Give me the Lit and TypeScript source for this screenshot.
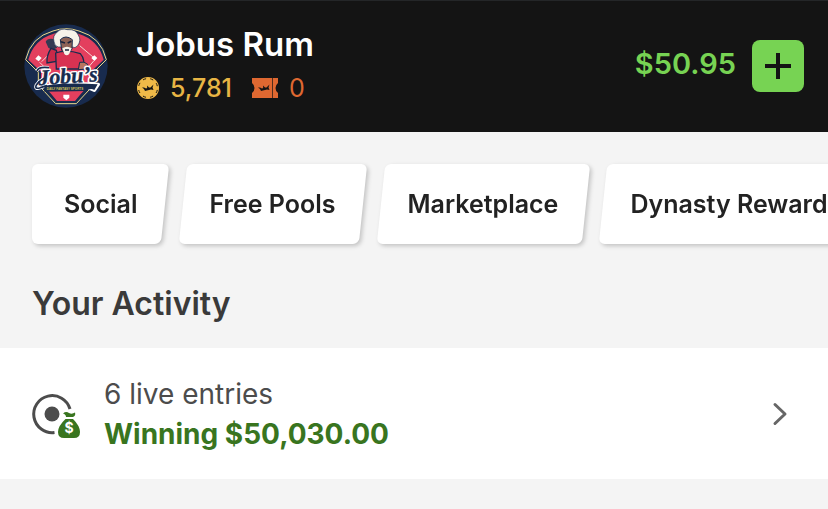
import { LitElement, html, css, svg } from "lit";
import { customElement, property } from "lit/decorators.js";
import { classMap } from "lit/directives/class-map.js";

const teamLogo = html`<svg class="logo" viewBox="23 23 252 252" role="img" aria-label="Team logo">
  <defs><clipPath id="disc"><circle cx="149" cy="149" r="125" /></clipPath></defs>
  <circle cx="149" cy="149" r="125" fill="#182b4e" />
  <g clip-path="url(#disc)">
    <path d="M28 130 Q44 62 110 44 Q149 30 188 44 Q254 62 270 130 L232 168 L232 206 L204 236 L180 262 H118 L94 236 L66 206 L66 168 Z"
      fill="#182b4e" stroke="#ecd98a" stroke-width="3" />
    <path d="M36 130 Q52 70 112 52 Q149 38 186 52 Q246 70 262 130 L224 166 L224 200 L194 232 L176 254 H122 L104 232 L74 200 L74 166 Z"
      fill="#e33f5e" />
    <path d="M76 136 L112 100 M70 138 L96 164 M190 88 L230 122 M232 134 L210 160"
      stroke="#f6d9d6" stroke-width="3" fill="none" />
    <path d="M66 117 l10 8 -9 10 -10 -8 Z M234 117 l9 8 -9 9 -9 -9 Z" fill="#fff" />
    <path d="M88 76 Q94 62 120 70 L122 94 Q108 104 96 94 Z" fill="#343a53" />
    <path d="M104 96 L120 102 L128 134 L92 140 Q90 118 104 96 Z" fill="#c92948" stroke="#182b4e" stroke-width="4" />
    <path d="M118 110 Q150 98 192 112 Q208 130 200 158 L120 158 Z" fill="#d83252" stroke="#182b4e" stroke-width="4" />
    <path d="M113 76 Q108 58 122 48 Q134 34 154 40 Q178 38 186 56 Q196 72 184 88 Q176 98 168 92 L126 92 Q114 90 113 76 Z" fill="#f7f3ea" stroke="#182b4e" stroke-width="2" />
    <path d="M132 70 Q148 54 168 70 L167 98 Q152 122 136 102 Z" fill="#8d6256" stroke="#182b4e" stroke-width="3" />
    <path d="M134 76 L146 80 M154 80 L165 75" stroke="#17223c" stroke-width="5" />
    <path d="M138 96 Q152 86 166 96 L158 114 Q150 120 144 113 Z" fill="#f7f3ea" />
    <path d="M146 101 H158" stroke="#17223c" stroke-width="4" />
    <path d="M190 138 q14 -4 24 6 l-4 14 -24 2 Z" fill="#b97460" stroke="#182b4e" stroke-width="3" />
    <text class="script outline" x="66" y="201" transform="rotate(-4 149 190)">Jobu’s</text>
    <path d="M62 164 Q66 150 98 154 M84 186 Q68 194 60 206 Q54 220 72 214 L92 208 Q150 198 246 204 L234 222 Q220 214 204 216"
      fill="none" stroke="#fff" stroke-width="10" stroke-linejoin="round" />
    <path d="M62 164 Q66 150 98 154 M84 186 Q68 194 60 206 Q54 220 72 214 L92 208"
      fill="none" stroke="#182b4e" stroke-width="5" />
    <path d="M84 208 Q150 198 244 204 L234 221 Q222 214 210 224 L84 226 Z" fill="#182b4e" />
    <text class="script" x="66" y="201" transform="rotate(-4 149 190)">Jobu’s</text>
    <text class="tagline" x="146" y="220">DAILY FANTASY SPORTS</text>
    <path d="M141 235 H159 V244 L150 252 L141 244 Z" fill="#fff" />
  </g>
</svg>`;

const crown = (x: number, y: number) => svg`<path transform="translate(${x} ${y})"
  d="M0 3.500 L2 3.500 L4 4.500 L5.200 4 L5 1.500 L7 3.500 L8.500 3.500 L11.500 0.500 L10.500 3.500 L11.500 6 L9 5.500 L3 7 L2 5 Z" fill="#141414" />`;

const coinIcon = html`<svg class="coin" viewBox="0 0 24 24" aria-hidden="true">
  <circle cx="12" cy="12" r="11" fill="#f0ba48" />
  <circle cx="12" cy="12" r="9.500" fill="none" stroke="#141414" stroke-width="1" stroke-dasharray="3.200 4.261" stroke-dashoffset="-2" />
  ${crown(6, 8)}
</svg>`;

const ticketIcon = html`<svg class="ticket" viewBox="0 0 28 22" aria-hidden="true">
  <path d="M1 1 H27 V6 Q24.500 8 24.500 11 Q24.500 14 27 16 V21 H1 V16 Q3.500 14 3.500 11 Q3.500 8 1 6 Z" fill="#df6831" />
  <path d="M21.500 1 V21" stroke="#141414" stroke-width="1" stroke-opacity="0.7" />
  ${crown(7, 7)}
</svg>`;

const liveIcon = html`<svg class="live" viewBox="0 -2 48 48" aria-hidden="true">
  <path d="M38 17 A18.500 18.500 0 1 0 22.500 40.500" fill="none" stroke="#4c4c4c" stroke-width="3" />
  <circle cx="20" cy="22" r="7.500" fill="#4c4c4c" />
  <path d="M31 21.500 Q34 19 37 21 Q40 22.500 43 20.500 Q44 23.500 41 25 L34 25 Q34 22.500 31 21.500 Z" fill="#39751f" />
  <path d="M33.500 27 H41 Q48 34 48 40 Q48 46 42 46 H32 Q26 46 26 40 Q26 34 33.500 27 Z" fill="#39751f" />
  <text class="dollar" x="37" y="41">$</text>
</svg>`;

@customElement("quick-links")
export class QuickLinks extends LitElement {
  @property({ attribute: false }) items: string[] = [];

  static styles = css`
    :host { display: block; overflow: hidden; }
    nav { display: flex; gap: 18px; padding: 32px; width: max-content; }
    a {
      position: relative;
      isolation: isolate;
      padding: 0 27px;
      font-size: 25px;
      font-weight: 600;
      line-height: 80px;
      color: #222;
      text-decoration: none;
      white-space: nowrap;
      filter: drop-shadow(2px 2px 2px rgba(0, 0, 0, 0.2));
    }
    a::before {
      content: "";
      position: absolute;
      z-index: -1;
      inset: 0;
      border-radius: 6px;
      background: #fff;
      transform: skewX(-6deg);
    }
    .first { padding-left: 32px; }
    .first::before { left: 16px; }
    .first::after {
      content: "";
      position: absolute;
      z-index: -1;
      inset: 0 16px 0 0;
      border-radius: 6px;
      background: #fff;
    }
  `;

  render() {
    return html`<nav aria-label="Quick links">
      ${this.items.map((t, i) => html`<a href="#" class=${classMap({ first: i === 0 })}>${t}</a>`)}
    </nav>`;
  }
}

@customElement("app-root")
export class AppRoot extends LitElement {
  static styles = css`
    :host {
      display: block;
      min-height: 100vh;
      background: #f4f4f4;
      font-family: Inter, "Liberation Sans", sans-serif;
      color: #3a3a3a;
    }
    header {
      display: flex;
      align-items: center;
      min-height: 132px;
      padding: 0 24px;
      background: #141414;
      box-shadow: inset 0 1px #242628;
    }
    .logo { width: 84px; height: 84px; flex: none; margin-right: 28px; overflow: visible; }
    .script {
      font: italic 700 66px "Liberation Serif", serif;
      fill: #182b4e;
      stroke: #182b4e;
      stroke-width: 1px;
    }
    .outline { stroke: #fff; stroke-width: 10px; stroke-linejoin: round; }
    .tagline { font: 700 9px "Liberation Sans", sans-serif; fill: #d9c65c; text-anchor: middle; }
    .user { flex: 1; min-width: 0; }
    h1 { margin: 0; font-size: 33px; font-weight: 600; line-height: 44px; color: #fff; }
    .points { display: flex; align-items: center; font-size: 25px; line-height: 44px; }
    .coin { width: 24px; height: 24px; margin-right: 10px; }
    .gold { color: #e8b544; font-weight: 500; }
    .ticket { width: 28px; height: 22px; margin: 0 10px 0 19px; }
    .orange { color: #df6831; }
    .balance { font-size: 29px; font-weight: 600; color: #77d353; line-height: 36px; padding-bottom: 4px; }
    .add {
      display: grid;
      place-items: center;
      width: 52px;
      height: 52px;
      margin-left: 16px;
      padding: 0;
      border: 0;
      border-radius: 8px;
      background: #77d353;
    }
    .add svg { width: 26px; height: 26px; }
    h2 { margin: 0; padding: 8px 32px 24px; font-size: 32px; font-weight: 600; line-height: 40px; }
    .activity {
      display: flex;
      align-items: center;
      gap: 24px;
      padding: 26px 40px 25px 32px;
      background: #fff;
      color: #4c4c4c;
      text-decoration: none;
    }
    .live { width: 48px; height: 48px; flex: none; overflow: visible; }
    .dollar { font: 700 14px Inter, sans-serif; fill: #fff; text-anchor: middle; }
    .summary { flex: 1; font-size: 28px; line-height: 40px; }
    .summary p { margin: 0; }
    .summary .win { color: #39751f; font-weight: 700; }
    .chevron { width: 16px; height: 24px; }
  `;

  render() {
    return html`
      <header>
        ${teamLogo}
        <div class="user">
          <h1>Jobus Rum</h1>
          <div class="points">
            ${coinIcon}<span class="gold">5,781</span>
            ${ticketIcon}<span class="orange">0</span>
          </div>
        </div>
        <span class="balance">$50.95</span>
        <button class="add" aria-label="Add funds">
          <svg viewBox="0 0 26 26"><path d="M13 0 V26 M0 13 H26" stroke="#141414" stroke-width="4" /></svg>
        </button>
      </header>
      <main>
        <quick-links .items=${["Social", "Free Pools", "Marketplace", "Dynasty Rewards"]}></quick-links>
        <h2>Your Activity</h2>
        <a class="activity" href="#">
          ${liveIcon}
          <div class="summary">
            <p>6 live entries</p>
            <p class="win">Winning $50,030.00</p>
          </div>
          <svg class="chevron" viewBox="0 0 16 24" aria-hidden="true">
            <path d="M3 2.500 L13 12 L3 21.500" fill="none" stroke="#666" stroke-width="3" stroke-linecap="round" stroke-linejoin="round" />
          </svg>
        </a>
      </main>
    `;
  }
}
